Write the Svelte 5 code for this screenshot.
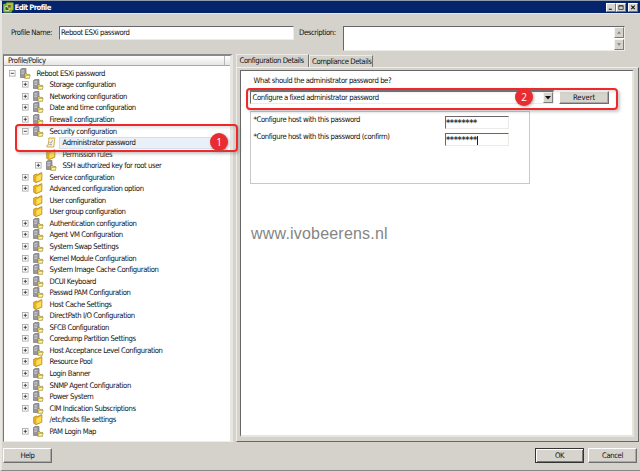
<script>
  // kind: h = host profile node, f = folder, s = script; open: '+', '-' or ''
  const rows = [
    [0, '-', 'h', 'Reboot ESXi password'],
    [1, '+', 'h', 'Storage configuration'],
    [1, '+', 'h', 'Networking configuration'],
    [1, '+', 'h', 'Date and time configuration'],
    [1, '+', 'h', 'Firewall configuration'],
    [1, '-', 'h', 'Security configuration'],
    [2, '', 's', 'Administrator password'],
    [2, '', 'f', 'Permission rules'],
    [2, '+', 'h', 'SSH authorized key for root user'],
    [1, '+', 'f', 'Service configuration'],
    [1, '+', 'f', 'Advanced configuration option'],
    [1, '', 'f', 'User configuration'],
    [1, '', 'f', 'User group configuration'],
    [1, '+', 'h', 'Authentication configuration'],
    [1, '+', 'h', 'Agent VM Configuration'],
    [1, '+', 'h', 'System Swap Settings'],
    [1, '+', 'h', 'Kernel Module Configuration'],
    [1, '+', 'h', 'System Image Cache Configuration'],
    [1, '+', 'h', 'DCUI Keyboard'],
    [1, '+', 'h', 'Passwd PAM Configuration'],
    [1, '', 'f', 'Host Cache Settings'],
    [1, '+', 'h', 'DirectPath I/O Configuration'],
    [1, '+', 'h', 'SFCB Configuration'],
    [1, '+', 'h', 'Coredump Partition Settings'],
    [1, '+', 'h', 'Host Acceptance Level Configuration'],
    [1, '+', 'f', 'Resource Pool'],
    [1, '+', 'h', 'Login Banner'],
    [1, '+', 'h', 'SNMP Agent Configuration'],
    [1, '+', 'h', 'Power System'],
    [1, '+', 'h', 'CIM Indication Subscriptions'],
    [1, '', 'f', '/etc/hosts file settings'],
    [1, '+', 'h', 'PAM Login Map']
  ];
</script>

{#snippet nodeIcon(kind)}
  <svg class="icon" width="11" height="11" viewBox="0 0 11 11">
    {#if kind === 'h'}
      <path d="M.5 1.5 2 .5h4v8.3L4.7 9.5H.5z" fill="#96969b" stroke="#77777c" stroke-width=".7" />
      <path d="M1.3 2.5h3M1.3 4h3M1.3 5.5h3" stroke="#d5d5d8" stroke-width=".7" />
      <path d="M4.6 5.6h2l.6.8h2.3v3.7H4.6z" fill="#ead766" stroke="#86762c" stroke-width=".6" />
      <path d="m4.8 10.2 1.1-2.8h4.4l-1 2.8z" fill="#fff59b" stroke="#9a8638" stroke-width=".5" />
    {:else if kind === 'f'}
      <path d="M.7 3.2 3.4 2l1 .6L8.8.6v7.6L3 10.6.7 9.3z" fill="#f0b81c" stroke="#a77710" stroke-width=".7" />
      <path d="M3 4.2 8.8 1.6 8.5 8 3 10.3z" fill="#ffde55" stroke="#c4931d" stroke-width=".5" />
    {:else}
      <path d="M3 1h6.2c-.9.6-.4 1.4-.6 2.2L7.7 10H1.1c-.8-.6-.5-1.6.4-1.7h.6L3 2.5C2.2 2.2 2.1 1.2 3 1z" fill="#fff8cf" stroke="#b8983b" stroke-width=".8" />
      <path d="M3 1h6.1l-.5 1.3H3z" fill="#e9cd65" />
      <path d="m3.7 5.3 1 1L6.7 3.4M3.4 7.7h2.4" fill="none" stroke="#7481d0" stroke-width=".9" />
    {/if}
  </svg>
{/snippet}

<div class="window">
  <header class="title">
    <svg width="11" height="11" viewBox="0 0 11 11">
      <rect x=".2" y="1.8" width="8.8" height="8.8" rx="1" fill="#79b52d" />
      <rect x="3" y=".4" width="7.5" height="8" rx="1" fill="#91c83d" stroke="#527d25" stroke-width=".5" />
      <path d="M2 4.5h4v4H2z" fill="#3b5b35" stroke="#e2edbc" stroke-width=".8" />
      <path d="M4.6 2.5h3.7v3.6H4.6z" fill="#536d4c" stroke="#f5ba45" stroke-width=".8" />
    </svg>
    <span>Edit Profile</span>
    <div class="controls">
      <i><svg viewBox="0 0 9 8"><path d="M2 6h3.5" stroke="#111" stroke-width="1.2" /></svg></i>
      <i><svg viewBox="0 0 9 8"><path d="M2 2h5v4.2H2zM2 2.3h5" fill="none" stroke="#111" stroke-width=".8" /></svg></i>
      <i class="close"><svg viewBox="0 0 9 8"><path d="m2.5 1.8 4 4m0-4-4 4" stroke="#111" stroke-width="1.2" /></svg></i>
    </div>
  </header>

  <section class="form">
    <label for="name">Profile Name:</label>
    <div id="name" class="sunken name">Reboot ESXi password</div>
    <span class="desc-label">Description:</span>
    <div class="sunken desc">
      <div class="scroll">
        <b><svg viewBox="0 0 9 11"><path d="m2 7 2.5-3L7 7z" fill="#858580" /></svg></b>
        <b><svg viewBox="0 0 9 11"><path d="m2 4 2.5 3L7 4z" fill="#858580" /></svg></b>
      </div>
    </div>
  </section>

  <main>
    <aside>
      <div class="head"><span>Profile/Policy</span></div>
      <div class="tree">
        {#each rows as [level, open, kind, text]}
          <div class="row level{level}">
            <span class="toggle">
              {#if open}
                <svg width="7" height="7" viewBox="0 0 7 7">
                  <rect x=".5" y=".5" width="5.6" height="5.6" fill="#fff" stroke="#a5a5a5" stroke-width=".8" />
                  <path d={open === '+' ? 'M1.7 3.3h3.2M3.3 1.7v3.2' : 'M1.7 3.3h3.2'} stroke="#333" stroke-width=".9" />
                </svg>
              {/if}
            </span>
            {@render nodeIcon(kind)}
            <span class="text" class:selected={kind === 's'}>{text}</span>
          </div>
        {/each}
      </div>
    </aside>

    <section class="details">
      <nav>
        <span class="tab active">Configuration Details</span>
        <span class="tab">Compliance Details</span>
      </nav>
      <div class="page">
        <div class="inner">
          <p>What should the administrator password be?</p>
          <div class="choice">
            <div class="sunken combo">
              <span>Configure a fixed administrator password</span>
              <b><svg viewBox="0 0 8 9"><path d="M1 3h6L4 6.4z" fill="#111" /></svg></b>
            </div>
            <div class="button revert">Revert</div>
          </div>
          <div class="group">
            <div class="field"><span>*Configure host with this password</span><div class="sunken pw">********</div></div>
            <div class="field"><span>*Configure host with this password (confirm)</span><div class="sunken pw caret">********</div></div>
          </div>
          <div class="site">www.ivobeerens.nl</div>
        </div>
      </div>
    </section>
  </main>

  <footer>
    <div class="button">Help</div>
    <div class="button ok">OK</div>
    <div class="button">Cancel</div>
  </footer>

  <div class="mark mark1"></div>
  <div class="mark mark2"></div>
  <div class="badge badge1">1</div>
  <div class="badge badge2">2</div>
</div>

<style>
  :global(body) { margin: 0; overflow: hidden; }
  .window, .window * { box-sizing: border-box; }
  .window {
    position: relative; width: 640px; height: 471px; background: #d5d2cc;
    border-top: 1px solid #8f9bad; border-left: 2px solid #e8e6e2; border-bottom: 1px solid #89878a;
    font-family: "DejaVu Sans Condensed", "DejaVu Sans", sans-serif; font-size: 7.7px; line-height: 11px;
    font-stretch: condensed; letter-spacing: -.42px; color: #111; white-space: nowrap;
    display: flex; flex-direction: column; overflow: hidden;
  }
  .title { height: 12px; background: #05246b; display: flex; align-items: center; color: #fff; font-weight: bold; padding-left: 1px; flex: none; }
  .title > span { margin-left: .5px; letter-spacing: -.6px; }
  .controls { margin-left: auto; display: flex; padding-right: 2px; }
  .controls i { width: 10px; height: 9px; background: #d8d5cf; border: 1px solid #77777a; border-top-color: #fff; border-left-color: #fff; display: block; }
  .controls svg { display: block; width: 8px; height: 7px; }
  .controls .close { margin-left: 2px; }
  .form { height: 41px; flex: none; display: flex; padding: 12px 0 0 9px; border-top: 1px solid #e8e6e0; }
  .form label { width: 48px; padding-top: 1px; }
  .sunken { background: #fff; border: 1px solid #edebe7; border-top: 1px solid #67676b; border-left: 1px solid #67676b; }
  .name { width: 235px; height: 14px; line-height: 12px; padding-left: 1px; }
  .desc-label { width: 44px; margin-left: 5px; padding-top: 1px; }
  .desc { width: 282px; height: 25px; display: flex; justify-content: flex-end; }
  .scroll { width: 10px; display: flex; flex-direction: column; gap: 1px; }
  b { font-weight: normal; display: block; background: #d6d3cc; border: 1px solid #7d7d7f; border-top-color: #f5f4f1; border-left-color: #f5f4f1; }
  b svg { display: block; width: 100%; height: 100%; }
  .scroll b { flex: 1; min-height: 0; }
  main { height: 389px; flex: none; display: flex; gap: 3px; padding-left: 1px; }
  aside { width: 230px; height: 388px; background: #fff; border-top: 2px solid #88888a; border-left: 1px solid #747477; border-right: 3px solid #e8e6e2; border-bottom: 1px solid #eeece8; }
  .head { height: 10px; line-height: 10px; background: linear-gradient(#fff, #e6e5e4); border-bottom: 1px solid #aaa9a8; padding-left: 4px; display: flex; justify-content: space-between; }
  .head::after { content: ""; width: 5px; border-left: 1px solid #b7b7b7; }
  .tree { padding-top: 1.5px; }
  .row { height: 11.56px; display: flex; align-items: center; padding-left: 5px; }
  .level1 { padding-left: 18px; }
  .level2 { padding-left: 31px; }
  .toggle { width: 7px; height: 7px; display: flex; flex: none; margin-right: 4px; }
  .icon { flex: none; }
  .text { margin-left: 5.5px; line-height: 11px; }
  .selected { background: #eaf0f8; border: 1px solid #d5dfed; height: 12px; line-height: 10px; width: 164px; margin-left: 2px; padding-left: 2.5px; }
  .details { width: 403px; height: 388px; display: flex; flex-direction: column; }
  nav { height: 13px; flex: none; display: flex; align-items: flex-end; }
  .tab { height: 12px; line-height: 12px; border: 1px solid #edebe7; border-right-color: #737374; border-bottom: 0; width: 64px; padding-left: 2px; }
  .tab.active { height: 13px; line-height: 12px; width: 73px; padding-left: 2.5px; }
  .page { flex: 1; min-height: 0; border: 1px solid #f0eee9; border-right: 1px solid #67676a; border-bottom: 1px solid #67676a; padding: 2px 4px 4px 3px; }
  .inner { height: 100%; background: #fff; border-left: 1px solid #67676a; border-top: 1px solid #67676a; border-right: 2px solid #e7e5e1; border-bottom: 2px solid #e7e5e1; padding: 4px 0 0 9px; }
  p { margin: 0 0 4px 3.5px; line-height: 11px; }
  .choice { display: flex; gap: 5px; }
  .combo { width: 304px; height: 14px; border-top-width: 2px; display: flex; justify-content: space-between; line-height: 12px; padding-left: 1.5px; }
  .combo b { width: 10px; height: 11px; }
  .button { width: 49px; height: 15px; display: flex; align-items: center; justify-content: center; background: #d7d4ce; border: 1px solid #6e6e70; border-top-color: #fff; border-left-color: #fff; box-shadow: inset -1px -1px #aaa8a4; }
  .revert { width: 50px; height: 13px; margin-top: 1px; letter-spacing: -.1px; }
  .group { width: 280px; height: 73px; border: 1px solid #c8c8c8; margin-top: 7px; padding: 4px 0 0 2.5px; }
  .field { height: 17px; display: flex; justify-content: space-between; padding-right: 20px; line-height: 8px; }
  .pw { width: 64px; height: 13px; line-height: 13px; font-family: "DejaVu Sans", sans-serif; font-stretch: normal; font-size: 8px; letter-spacing: -.1px; font-weight: bold; letter-spacing: -.32px; color: #333; }
  .caret::after { content: ""; display: inline-block; width: 1px; height: 9px; background: #222; vertical-align: middle; }
  .site { font: 16px/20px "Liberation Sans", Arial, sans-serif; letter-spacing: .2px; color: #858585; margin-top: 40px; padding-left: 1px; }
  footer { flex: 1; display: flex; gap: 4px; padding: 5px 3px 0 1px; }
  .ok { margin-left: auto; border-color: #333; box-shadow: inset 1px 1px #fff, inset -1px -1px #77777a; }
  .mark { position: absolute; border: 2px solid #ef2929; border-radius: 4px; box-shadow: 2px 2px 3px #7776, inset 1px 2px 3px #9994; }
  .mark1 { left: 13px; top: 123px; width: 223px; height: 28px; }
  .mark2 { left: 244px; top: 87px; width: 372px; height: 22px; }
  .badge { position: absolute; width: 18px; height: 18px; border-radius: 50%; background: #e72c32; color: #fff; font: 10px/18px "Open Sans", sans-serif; letter-spacing: 0; text-align: center; box-shadow: 1px 1px 3px #7779; }
  .badge1 { left: 208px; top: 132px; }
  .badge2 { left: 513px; top: 87px; }
</style>
